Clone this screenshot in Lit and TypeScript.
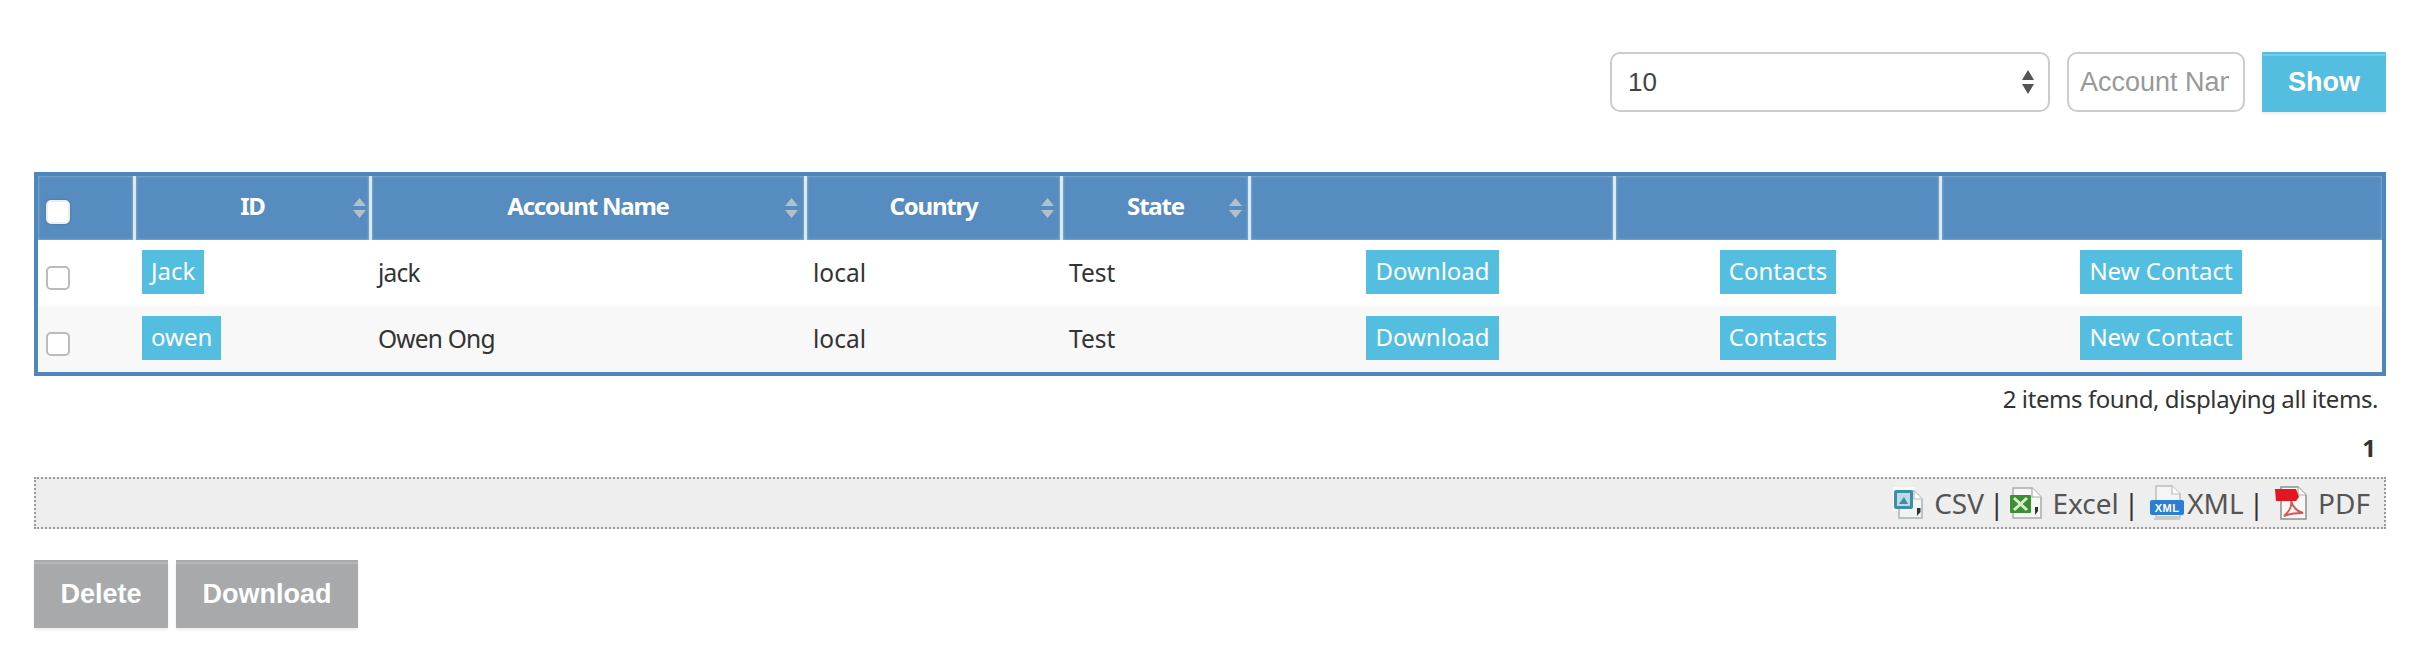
import { LitElement, html, css } from "lit";
import { customElement } from "lit/decorators.js";

const sortIcon = html`<svg class="sort" width="15" height="20" viewBox="0 0 15 20"><path d="M7.5 0 L14 8 H1 Z" fill="#b4c0cc"/><path d="M7.5 20 L14 12 H1 Z" fill="#b4c0cc"/></svg>`;

const icons: Record<string, unknown> = {
  csv: html`<svg class="ic" width="31" height="32" viewBox="0 0 31 32"><rect x="0" y="0" width="22" height="24" fill="#fbfbfb"/><path d="M6 4 H21 L29 12 V31 H6 Z" fill="#f2f4f4" stroke="#a9b2b2" stroke-width="1.5"/><path d="M21 4 V12 H29" fill="#fff" stroke="#b9bdbd" stroke-width="1.2"/><rect x="1" y="3" width="19" height="19" rx="2" fill="#3f8ea6"/><rect x="4" y="6" width="13" height="13" fill="#b9dbe6"/><path d="M6 17 L11 10 L15 17 Z" fill="#3f8ea6"/><path d="M24 21 h3.500 v4 l-3.500 4 z" fill="#333"/></svg>`,
  excel: html`<svg class="ic" width="32" height="32" viewBox="0 0 32 32"><path d="M3 1 H22 L31 10 V31 H3 Z" fill="#f7f7f7" stroke="#a9aeaa" stroke-width="1.5"/><path d="M22 1 V10 H31" fill="#fff" stroke="#a9aeaa" stroke-width="1.2"/><rect x="0" y="8" width="21" height="18" rx="1" fill="#3d8f33"/><path d="M4 11 L17 23 M17 11 L4 23" stroke="#d7eccb" stroke-width="3"/><path d="M25 20 h3 v4 l-3 4 z" fill="#333"/></svg>`,
  xml: html`<svg class="ic" width="34" height="36" viewBox="0 0 34 36"><path d="M6 1 H22 L30 9 V32 H6 Z" fill="#f5f5f5" stroke="#bcbcbc" stroke-width="1.5"/><path d="M22 1 V9 H30" fill="#fff" stroke="#bcbcbc" stroke-width="1.2"/><rect x="0" y="15" width="34" height="15" rx="2" fill="#2a7fd3"/><text x="17" y="26.500" text-anchor="middle" class="xmltxt">XML</text><rect x="4" y="33" width="26" height="2" fill="#ccc"/></svg>`,
  pdf: html`<svg class="ic" width="33" height="36" viewBox="0 0 33 36"><path d="M6 2 H23 L31 10 V34 H6 Z" fill="#f8f8f8" stroke="#8e8e8e" stroke-width="1.5"/><path d="M23 2 V10 H31" fill="#fff" stroke="#aaa" stroke-width="1.2"/><path d="M0 4 H21 L24 12 L21 16 H1 Z" fill="#e2171f"/><path d="M9 31 C15 26 17 20 16 16 C18 22 21 26 28 28 C21 28 14 29 9 31 Z" fill="none" stroke="#d9534f" stroke-width="2"/></svg>`,
};

@customElement("app-root")
export class AppRoot extends LitElement {
  static styles = css`
    :host { display: block; width: 2414px; height: 658px; background: #fff; font-family: "Noto Sans", sans-serif; color: #333; overflow: hidden; }
    .wrap { padding: 52px 28px 0 34px; }
    .filters { display: flex; justify-content: flex-end; gap: 17px; height: 60px; }
    .selbox { position: relative; width: 440px; height: 60px; }
    select { appearance: none; width: 100%; height: 100%; box-sizing: border-box; border: 2px solid #ccc; border-radius: 10px; background: #fff; font: 26px "Liberation Sans", sans-serif; color: #444; padding: 0 16px; }
    .arrows { position: absolute; right: 15px; top: 17px; }
    input { width: 178px; height: 60px; box-sizing: border-box; border: 2px solid #ccc; border-radius: 10px; background: #fff; font: 27px "Liberation Sans", sans-serif; padding: 0 14px 0 11px; outline: none; }
    input::placeholder { color: #999; opacity: 1; }
    .btn { border: 0; padding: 0; height: 100%; box-sizing: border-box; color: #fff; font: bold 27px "Liberation Sans", sans-serif; box-shadow: inset 0 2px 0 0 var(--edge), inset 0 4px 0 0 var(--hl), 0 2px 3px rgba(0,0,0,.08); }
    .show { width: 124px; background: #54bee1; --edge: #54bee1; --hl: #74cbe7; }
    table { margin-top: 60px; width: 2352px; table-layout: fixed; border-collapse: separate; border-spacing: 0; border: 4px solid #4f86bc; box-sizing: border-box; }
    th { height: 64px; padding: 0; background: #568cc0; color: #fff; font-size: 24px; font-weight: 700; letter-spacing: -1.2px; border-right: 3px solid #dce8f2; box-shadow: inset 0 0 2px 1px #7aa6d0; position: relative; box-sizing: border-box; }
    th:last-child { border-right: 0; }
    th .lbl { position: relative; top: -3px; }
    .sort { position: absolute; right: 5px; top: 22px; }
    th:nth-child(2) .sort { right: 2px; }
    td { height: 66px; padding: 0 6px; font-size: 24.5px; box-sizing: border-box; color: #333; line-height: 56px; }
    td.name { letter-spacing: -0.8px; }
    tr.even td { background: #f8f8f8; }
    td.c, td.first { text-align: center; }
    td.first, th.first { padding: 0; }
    .cb { display: block; width: 24px; height: 24px; box-sizing: border-box; border-radius: 5px; border: 2px solid #bbb; background: #fff; margin-left: 8px; position: relative; top: 5px; }
    th .cb { border-color: #eee; box-shadow: 0 0 2px rgba(0,0,0,.3); top: 4px; }
    .tag { display: inline-block; height: 44px; line-height: 42px; padding: 0 9px; background: #54bee1; color: #fff; font-size: 24px; vertical-align: top; position: relative; top: 5px; }
    td.c .tag { margin-left: -2px; }
    .info { height: 48px; line-height: 46px; text-align: right; font-size: 24px; letter-spacing: -0.42px; padding-right: 8px; color: #333; }
    .pager { height: 48px; line-height: 48px; text-align: right; font-size: 24px; font-weight: 700; padding-right: 10px; }
    .export { margin-top: 5px; height: 52px; box-sizing: border-box; border: 2px dotted #999; background: #eee; display: flex; justify-content: flex-end; align-items: center; padding-right: 14px; font-size: 28px; line-height: 46px; color: #555; }
    .export .ic { flex: none; }
    .export .ic + span { margin-left: 10px; }
    .export .ic + span.tight { margin-left: 3px; }
    .sep { color: #333; margin: 0 11px 0 5px; }
    .sep.first { margin-right: 6px; }
    .actions { margin-top: 31px; display: flex; gap: 8px; height: 68px; }
    .gray { background: #a7a9ab; --edge: #a7a9ab; --hl: #b4b6b8; }
    .del { width: 134px; }
    .dl { width: 182px; }
    .xmltxt { font: bold 11px "Liberation Sans", sans-serif; fill: #fff; letter-spacing: .5px; }
  `;

  private rows = [["Jack", "jack"], ["owen", "Owen Ong"]];

  render() {
    return html`<div class="wrap">
      <div class="filters">
        <div class="selbox">
          <select aria-label="Page size"><option>10</option></select>
          <svg class="arrows" width="14" height="26" viewBox="0 0 14 26"><path d="M7 1 L13 11 H1 Z M7 25 L13 15 H1 Z" fill="#555"/></svg>
        </div>
        <input placeholder="Account Name" />
        <button class="btn show">Show</button>
      </div>
      <table>
        <colgroup>
          ${[98, 236, 435, 256, 188, 365, 326, 440].map((w) => html`<col style="width:${w}px" />`)}
        </colgroup>
        <thead><tr>
          <th class="first"><span class="cb"></span></th>
          ${["ID", "Account Name", "Country", "State"].map((t) => html`<th><span class="lbl">${t}</span>${sortIcon}</th>`)}
          <th></th><th></th><th></th>
        </tr></thead>
        <tbody>
          ${this.rows.map(([id, name], i) => html`<tr class=${i % 2 ? "even" : ""}>
            <td class="first"><span class="cb"></span></td>
            <td><span class="tag">${id}</span></td>
            <td class="name">${name}</td><td>local</td><td>Test</td>
            <td class="c"><span class="tag">Download</span></td>
            <td class="c"><span class="tag">Contacts</span></td>
            <td class="c"><span class="tag">New Contact</span></td>
          </tr>`)}
        </tbody>
      </table>
      <div class="info">2 items found, displaying all items.</div>
      <div class="pager">1</div>
      <div class="export">
        ${icons.csv}<span>CSV</span><span class="sep first">|</span>
        ${icons.excel}<span>Excel</span><span class="sep">|</span>
        ${icons.xml}<span class="tight">XML</span><span class="sep">|</span>
        ${icons.pdf}<span>PDF</span>
      </div>
      <div class="actions">
        <button class="btn gray del">Delete</button>
        <button class="btn gray dl">Download</button>
      </div>
    </div>`;
  }
}
